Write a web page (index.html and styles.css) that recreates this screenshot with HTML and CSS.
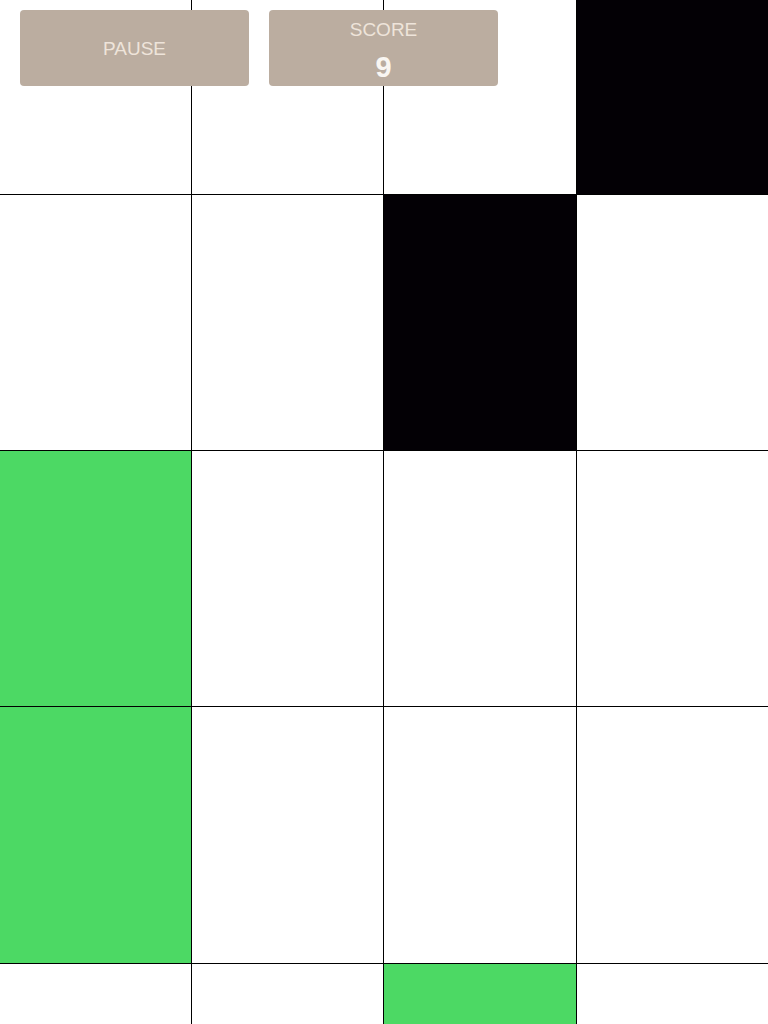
FILE: index.html
```html
<!DOCTYPE html>
<html>
<head>
<meta charset="utf-8">
<link rel="stylesheet" href="styles.css">
</head>
<body>
<div class="game">
  <div class="board">
    <div class="cell"></div><div class="cell"></div><div class="cell"></div><div class="cell black"></div>
    <div class="cell"></div><div class="cell"></div><div class="cell black"></div><div class="cell"></div>
    <div class="cell green"></div><div class="cell"></div><div class="cell"></div><div class="cell"></div>
    <div class="cell green"></div><div class="cell"></div><div class="cell"></div><div class="cell"></div>
    <div class="cell"></div><div class="cell"></div><div class="cell green"></div><div class="cell"></div>
  </div>
  <div class="hud">
    <div class="btn pause">PAUSE</div>
    <div class="btn score">
      <div class="label">SCORE</div>
      <div class="value">9</div>
    </div>
  </div>
</div>
</body>
</html>
```
FILE: styles.css
```css
html, body {
  margin: 0;
  padding: 0;
  background: #fff;
  overflow: hidden;
}
.game {
  position: relative;
  width: 768px;
  height: 1024px;
  overflow: hidden;
  font-family: "Liberation Sans", Arial, sans-serif;
}
.board {
  display: grid;
  grid-template-columns: 192px 192px 193px 191px;
  grid-template-rows: 195px 256px 256px 257px 256px;
}
.cell {
  background: #fff;
  border-right: 1px solid #000;
  border-bottom: 1px solid #000;
}
.cell:nth-child(4n) {
  border-right: none;
}
.cell.black {
  background: #030005;
}
.cell.green {
  background: #4cd964;
}
.hud {
  position: absolute;
  top: 10px;
  left: 20px;
  display: flex;
  gap: 20px;
}
.btn {
  box-sizing: border-box;
  width: 229px;
  height: 76px;
  background: #bbada0;
  border-radius: 4px;
  color: #eee4da;
  display: flex;
  flex-direction: column;
  align-items: center;
  justify-content: center;
}
.pause {
  font-size: 19px;
  padding-top: 2px;
}
.score .label {
  font-size: 19px;
  line-height: 22px;
  margin-top: 5px;
}
.score .value {
  font-size: 29px;
  font-weight: bold;
  color: #f9f6f2;
  line-height: 30px;
  margin-top: 11px;
}
```
